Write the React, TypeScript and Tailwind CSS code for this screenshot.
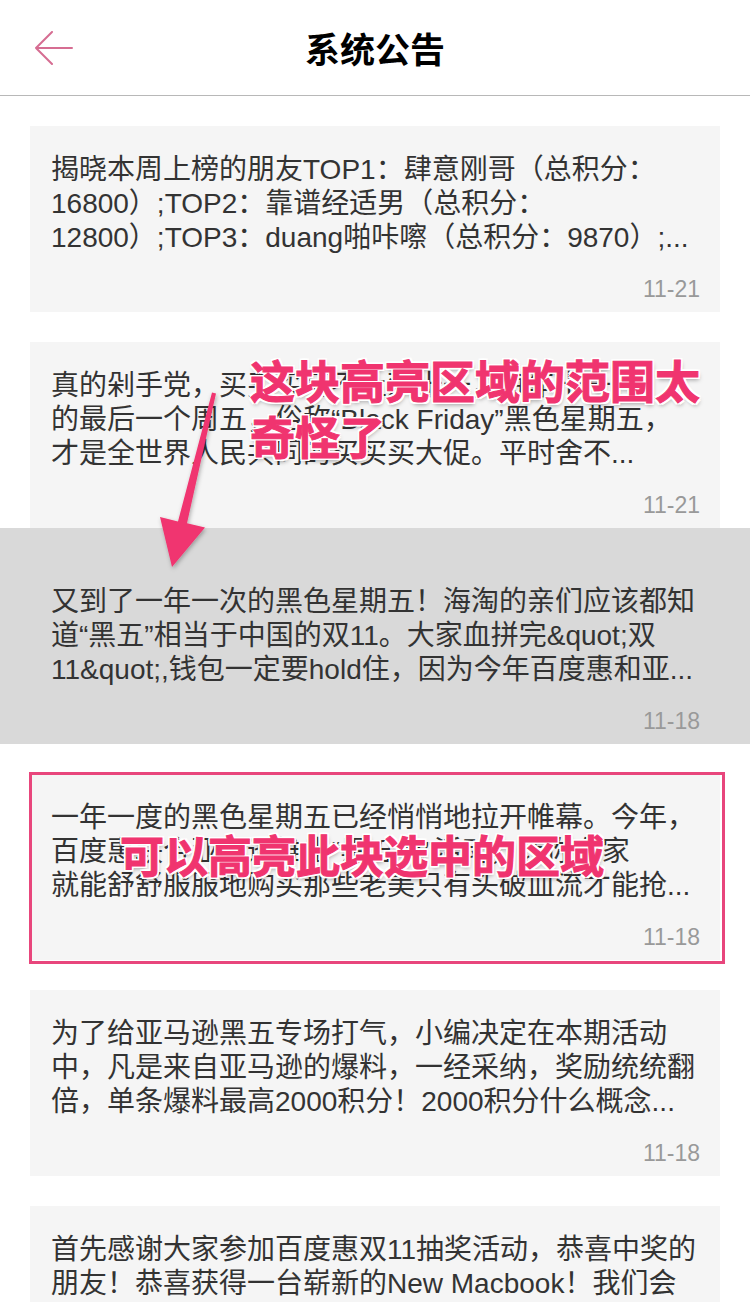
import React from "react";

type Notice = {
  lines: string[];
  date: string;
  active?: boolean;
};

const notices: Notice[] = [
  {
    lines: [
      "揭晓本周上榜的朋友TOP1：肆意刚哥（总积分：",
      "16800）;TOP2：靠谱经适男（总积分：",
      "12800）;TOP3：duang啪咔嚓（总积分：9870）;...",
    ],
    date: "11-21",
  },
  {
    lines: [
      "真的剁手党，买买买可不止双十一，每年十一月",
      "的最后一个周五，俗称“Black Friday”黑色星期五，",
      "才是全世界人民共同的买买买大促。平时舍不...",
    ],
    date: "11-21",
  },
  {
    lines: [
      "又到了一年一次的黑色星期五！海淘的亲们应该都知",
      "道“黑五”相当于中国的双11。大家血拼完&quot;双",
      "11&quot;,钱包一定要hold住，因为今年百度惠和亚...",
    ],
    date: "11-18",
    active: true,
  },
  {
    lines: [
      "一年一度的黑色星期五已经悄悄地拉开帷幕。今年，",
      "百度惠联合亚马逊推出“黑五节”活动，让你在家",
      "就能舒舒服服地购买那些老美只有头破血流才能抢...",
    ],
    date: "11-18",
  },
  {
    lines: [
      "为了给亚马逊黑五专场打气，小编决定在本期活动",
      "中，凡是来自亚马逊的爆料，一经采纳，奖励统统翻",
      "倍，单条爆料最高2000积分！2000积分什么概念...",
    ],
    date: "11-18",
  },
  {
    lines: [
      "首先感谢大家参加百度惠双11抽奖活动，恭喜中奖的",
      "朋友！恭喜获得一台崭新的New Macbook！我们会",
      "尽快与中奖的朋友取得联系，请保持手机畅通...",
    ],
    date: "11-15",
  },
];

const BackArrow = () => (
  <svg width="40" height="34" viewBox="0 0 40 34" fill="none">
    <path
      d="M38 17H2M18 1L2 17L18 33"
      stroke="#d66d92"
      strokeWidth="2"
      strokeLinecap="round"
      strokeLinejoin="round"
    />
  </svg>
);

const NoticeCard = ({ notice }: { notice: Notice }) => (
  <div className={notice.active ? "bg-[#d9d9d9] px-[30px] pt-[30px]" : "px-[30px] pt-[30px]"}>
    <div
      className={
        notice.active
          ? "flex h-[186px] flex-col pt-[27px] pr-[20px] pb-[11px] pl-[21px]"
          : "flex h-[186px] flex-col bg-[#f5f5f5] pt-[27px] pr-[20px] pb-[11px] pl-[21px]"
      }
    >
      <div className="text-[28px] leading-[34px] text-[#333]">
        {notice.lines.map((line, i) => (
          <div key={i} className="overflow-hidden whitespace-nowrap">
            {line}
          </div>
        ))}
      </div>
      <div className="mt-auto text-right text-[23px] leading-[24px] text-[#999]">
        {notice.date}
      </div>
    </div>
  </div>
);

// skitch-style annotations drawn on top of the screen
const noteText =
  "font-bold text-[#f0346f] [-webkit-text-stroke:1px_#f0346f] [text-shadow:2px_0_0_#fff,-2px_0_0_#fff,0_2px_0_#fff,0_-2px_0_#fff,2px_2px_0_#fff,-2px_-2px_0_#fff,2px_-2px_0_#fff,-2px_2px_0_#fff,1px_3px_4px_rgba(0,0,0,0.35)]";

export default function App() {
  return (
    <div className="relative h-[1302px] w-[750px] overflow-hidden bg-white font-['Liberation_Sans','Noto_Sans_CJK_SC',sans-serif]">
      {/* Header */}
      <div className="flex h-[96px] items-center border-b border-[#b8b8b8]">
        <div className="flex w-[150px] items-center pl-[34px]">
          <BackArrow />
        </div>
        <div className="flex-1 pt-[5px] text-center text-[35px] font-bold leading-none text-black">
          系统公告
        </div>
        <div className="w-[150px]" />
      </div>

      {/* List */}
      <div className="flex flex-col">
        {notices.map((n, i) => (
          <NoticeCard key={i} notice={n} />
        ))}
      </div>

      {/* Annotations */}
      <div className="pointer-events-none absolute top-[772px] left-[29px] h-[192px] w-[696px] border-[3px] border-[#e8467c]" />

      <svg
        className="pointer-events-none absolute top-0 left-0"
        width="750"
        height="1302"
        viewBox="0 0 750 1302"
      >
        <defs>
          <filter id="arrowShadow" x="-20%" y="-20%" width="140%" height="140%">
            <feDropShadow dx="1" dy="2" stdDeviation="2" floodColor="#000" floodOpacity="0.3" />
          </filter>
        </defs>
        <polygon
          points="212,392.6 216,393.4 187,523.2 205,527.5 172,567 160,517.1 178,521.4"
          fill="#f0346f"
          strokeLinejoin="round"
          filter="url(#arrowShadow)"
        />
      </svg>

      <div className={"pointer-events-none absolute top-[356px] left-[250px] text-[45px] leading-[56px] " + noteText}>
        这块高亮区域的范围太
        <br />
        奇怪了
      </div>

      <div className={"pointer-events-none absolute top-[830px] left-[120px] text-[44px] leading-[56px] " + noteText}>
        可以高亮此块选中的区域
      </div>
    </div>
  );
}
